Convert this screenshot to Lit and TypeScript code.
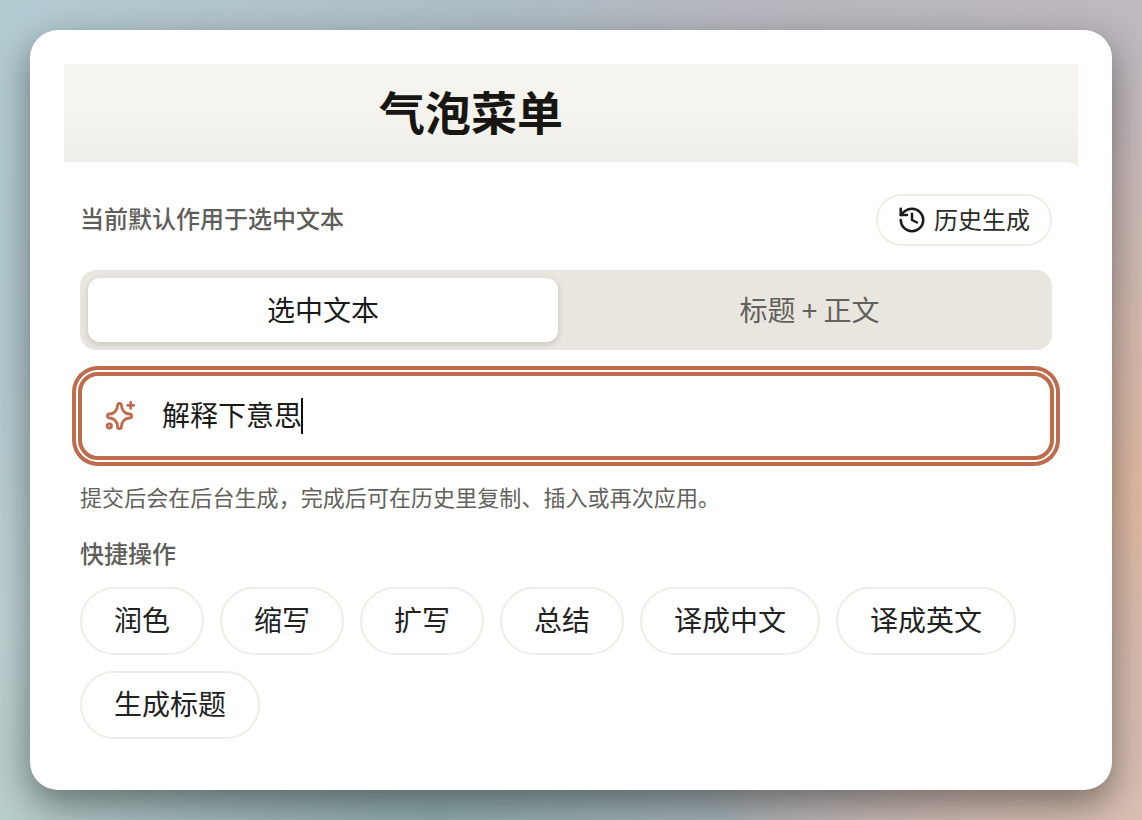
import { LitElement, html, css } from "lit";
import { customElement } from "lit/decorators.js";

const ACTIONS = ["润色", "缩写", "扩写", "总结", "译成中文", "译成英文", "生成标题"];

@customElement("app-root")
export class AppRoot extends LitElement {
  static styles = css`
    :host {
      display: block;
      width: 1142px;
      height: 820px;
      font-family: "Noto Sans CJK SC", "Noto Sans", sans-serif;
      color: #1a1a18;
    }
    .stage {
      box-sizing: border-box;
      width: 1142px;
      height: 820px;
      padding: 30px;
      overflow: hidden;
      background:
        radial-gradient(420px 340px at 100% 100%, #d9bfb1 0%, rgba(217, 191, 177, 0) 100%),
        radial-gradient(560px 460px at 100% 62%, #e2b9a1 0%, rgba(226, 185, 161, 0) 100%),
        radial-gradient(560px 300px at 38% 100%, #8fadb0 0%, rgba(143, 173, 176, 0) 100%),
        radial-gradient(620px 460px at 0% 100%, #c4d8d4 0%, rgba(196, 216, 212, 0) 100%),
        linear-gradient(100deg, #b3ccd2 0%, #aebcc4 40%, #b9b6be 62%, #c0bac0 100%);
    }
    .card {
      box-sizing: border-box;
      height: 760px;
      padding: 34px;
      background: #fff;
      border-radius: 28px;
      box-shadow: 0 14px 36px rgba(20, 20, 20, 0.48);
    }
    .head {
      height: 118px;
      padding-left: 315px;
      background: linear-gradient(180deg, #f5f4ef 0%, #f4f3ee 45%, #eeede8 84%);
    }
    .head h1 {
      margin: 0;
      font-size: 46px;
      line-height: 92px;
      font-weight: 700;
      color: #171612;
    }
    .panel {
      margin-top: -20px;
      padding: 32px 26px 0 16px;
      background: #fff;
      border-radius: 2px 16px 0 0 / 2px 6px 0 0;
    }
    .top {
      display: flex;
      align-items: center;
      justify-content: space-between;
    }
    .note {
      padding-bottom: 4px;
      font-size: 24px;
      line-height: 48px;
      font-weight: 500;
      color: #5f5e59;
    }
    .history {
      box-sizing: border-box;
      display: flex;
      align-items: center;
      gap: 7px;
      width: 176px;
      height: 52px;
      padding-left: 19px;
      border: 2px solid #f0ede6;
      border-radius: 26px;
      font-size: 24px;
      color: #2a2a27;
    }
    .history svg {
      flex: none;
    }
    .history span {
      margin-bottom: 4px;
    }
    .seg {
      box-sizing: border-box;
      display: grid;
      grid-template-columns: 470px 1fr;
      height: 80px;
      margin-top: 24px;
      padding: 8px;
      background: #e8e6df;
      border-radius: 16px;
      font-size: 28px;
      text-align: center;
    }
    .seg div {
      height: 64px;
      line-height: 62px;
      color: #62615b;
    }
    .seg .off {
      padding-left: 17px;
    }
    .seg .on {
      background: #fff;
      border-radius: 12px;
      color: #1a1a18;
      box-shadow: 0 2px 6px rgba(60, 55, 40, 0.2);
    }
    .field {
      box-sizing: border-box;
      display: flex;
      align-items: center;
      gap: 26px;
      height: 88px;
      margin: 22px -2px 0;
      padding-left: 22px;
      background: #fff;
      border: 4px solid #bf6c4d;
      border-radius: 20px;
      box-shadow: 0 0 0 2px #fff, 0 0 0 6px #bf6c4d;
      font-size: 28px;
    }
    .field svg {
      flex: none;
    }
    .typed {
      display: flex;
      align-items: center;
      line-height: 40px;
    }
    .typed span {
      margin-bottom: 4px;
    }
    .typed .caret {
      width: 2px;
      height: 36px;
      margin: 0 0 0 -1px;
      background: #111;
    }
    .hint {
      margin-top: 20px;
      font-size: 22px;
      line-height: 32px;
      letter-spacing: 0.07px;
      color: #62615b;
    }
    .label {
      margin-top: 25px;
      font-size: 24px;
      line-height: 32px;
      font-weight: 500;
      color: #5f5e59;
    }
    .chips {
      display: flex;
      flex-wrap: wrap;
      gap: 16px;
      margin-top: 18px;
    }
    .chip {
      box-sizing: border-box;
      height: 68px;
      padding: 0 32px;
      border: 2px solid #f0ede6;
      border-radius: 34px;
      font-size: 28px;
      line-height: 60px;
      color: #22221f;
    }
  `;

  render() {
    return html`
      <div class="stage">
        <div class="card">
          <div class="head"><h1>气泡菜单</h1></div>
          <div class="panel">
            <div class="top">
              <div class="note">当前默认作用于选中文本</div>
              <div class="history">
                <svg width="30" height="30" viewBox="0 0 24 24" fill="none" stroke="#1a1a18" stroke-width="2" stroke-linecap="round" stroke-linejoin="round">
                  <path d="M3 12a9 9 0 1 0 9-9 9.750 9.750 0 0 0-6.740 2.740L3 8" />
                  <path d="M3 3v5h5" />
                  <path d="M12 7v5l4 2" />
                </svg>
                <span>历史生成</span>
              </div>
            </div>
            <div class="seg">
              <div class="on">选中文本</div>
              <div class="off">标题 + 正文</div>
            </div>
            <div class="field">
              <svg width="32" height="32" viewBox="0 0 32 32" fill="none" stroke="#bf6c4d" stroke-width="2.800" stroke-linecap="round" stroke-linejoin="round">
                <path d="M13.500 5.500C13.500 2.700 17.500 2.700 17.500 5.500C17.500 10 21 14 25.500 14C28.300 14 28.300 18 25.500 18C21 18 17.500 22 17.500 26.500C17.500 29.300 13.500 29.300 13.500 26.500C13.500 22 10 18 5.500 18C2.700 18 2.700 14 5.500 14C10 14 13.500 10 13.500 5.500Z" />
                <path d="M26.700 2.300v6M23.700 5.300h6" />
                <circle cx="5.300" cy="26" r="2.200" />
              </svg>
              <div class="typed"><span>解释下意思</span><span class="caret"></span></div>
            </div>
            <div class="hint">提交后会在后台生成，完成后可在历史里复制、插入或再次应用。</div>
            <div class="label">快捷操作</div>
            <div class="chips">
              ${ACTIONS.map((a) => html`<div class="chip">${a}</div>`)}
            </div>
          </div>
        </div>
      </div>
    `;
  }
}
